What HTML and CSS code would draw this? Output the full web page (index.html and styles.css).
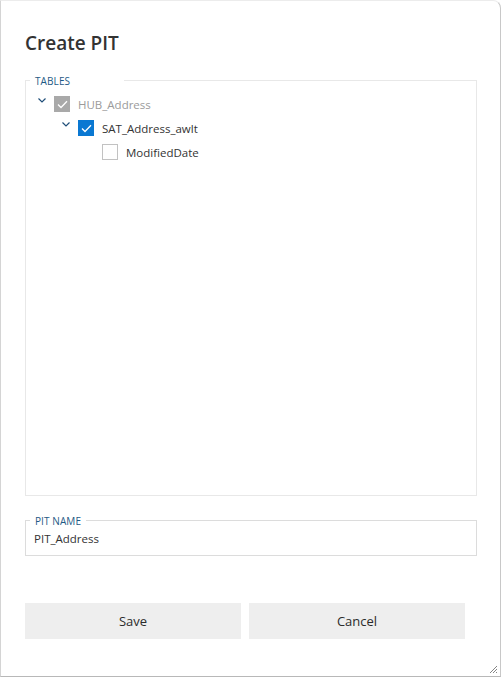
FILE: index.html
```html
<!DOCTYPE html>
<html>
<head>
<meta charset="utf-8">
<link rel="stylesheet" href="styles.css">
</head>
<body>
<div class="dialog">
  <h1 class="title">Create PIT</h1>
  <fieldset class="group tables">
    <legend class="legend legend-wide">TABLES</legend>
    <ul class="tree">
      <li class="row lvl0">
        <span class="chev"><svg width="8" height="5" viewBox="0 0 8 5"><path d="M0.5 0.5 L4 4 L7.5 0.5" fill="none" stroke="#1f4e79" stroke-width="1.2"/></svg></span>
        <span class="cb cb-disabled"><svg width="11" height="9" viewBox="0 0 11 9"><path d="M1 4.5 L4 7.5 L10 1.2" fill="none" stroke="#fff" stroke-width="1.3"/></svg></span>
        <span class="lbl lbl-disabled">HUB_Address</span>
      </li>
      <li class="row lvl1">
        <span class="chev"><svg width="8" height="5" viewBox="0 0 8 5"><path d="M0.5 0.5 L4 4 L7.5 0.5" fill="none" stroke="#1f4e79" stroke-width="1.2"/></svg></span>
        <span class="cb cb-checked"><svg width="11" height="9" viewBox="0 0 11 9"><path d="M1 4.5 L4 7.5 L10 1.2" fill="none" stroke="#fff" stroke-width="1.3"/></svg></span>
        <span class="lbl">SAT_Address_awlt</span>
      </li>
      <li class="row lvl2">
        <span class="chev"></span>
        <span class="cb"></span>
        <span class="lbl">ModifiedDate</span>
      </li>
    </ul>
  </fieldset>
  <fieldset class="group name">
    <legend class="legend">PIT NAME</legend>
    <div class="value">PIT_Address</div>
  </fieldset>
  <div class="actions">
    <button class="btn">Save</button>
    <button class="btn">Cancel</button>
  </div>
  <span class="grip"><svg width="9" height="9" viewBox="0 0 9 9"><path d="M1 8 L8 1 M4 8 L8 4 M7 8 L8 7" stroke="#777" stroke-width="0.9"/></svg></span>
</div>
</body>
</html>
```
FILE: styles.css
```css
* { box-sizing: border-box; }
html, body { margin: 0; padding: 0; background: #fff; }
body {
  font-family: "Open Sans", "Noto Sans", sans-serif;
  color: #333;
}
.dialog {
  position: relative;
  width: 501px;
  height: 677px;
  border: 1px solid #d4d4d4;
  border-top-color: #ececec;
  border-bottom-color: #b8b8b8;
  border-right-color: #c8c8c8;
  border-radius: 0 8px 0 0;
  padding: 0 24px;
  background: #fff;
}
.title {
  margin: 0;
  padding-top: 29px;
  height: 79px;
  font-size: 19px;
  line-height: 26px;
  font-weight: 600;
  color: #333;
}
.group {
  margin: 0;
  border: 1px solid #e8e8e8;
  padding: 0;
  min-width: 0;
  width: 452px;
}
.legend {
  margin-left: 4px;
  padding: 2px 5px 0;
  font-size: 10px;
  line-height: 10px;
  color: #1e5a86;
  letter-spacing: 0.1px;
  font-weight: 500;
}
.legend-wide { padding-right: 54px; }
.tables { height: 422px; margin-top: -6px; }
.tree { list-style: none; margin: 0; padding: 6px 0 0 0; }
.row {
  display: flex;
  align-items: center;
  height: 24px;
}
.lvl0 { padding-left: 12px; }
.lvl1 { padding-left: 36px; }
.lvl2 { padding-left: 60px; }
.chev {
  width: 16px;
  height: 16px;
  display: flex;
  align-items: flex-start;
  justify-content: flex-start;
  padding-top: 2px;
}
.cb {
  width: 16px;
  height: 16px;
  border: 1px solid #c2c2c2;
  background: #fff;
  display: flex;
  align-items: center;
  justify-content: center;
  margin-left: 0;
}
.cb-disabled { background: #a9a9a9; border-color: #a9a9a9; }
.cb-checked { background: #0a78d2; border-color: #0a78d2; }
.lbl {
  margin-left: 8px;
  font-size: 11.5px;
  color: #333;
}
.lbl-disabled { color: #9b9b9b; }
.name {
  margin-top: 18px;
  height: 42px;
  border-color: #dcdcdc;
}
.value {
  padding: 5px 0 0 8px;
  font-size: 11.5px;
  line-height: 16px;
  color: #333;
}
.actions {
  display: flex;
  gap: 8px;
  margin-top: 47px;
}
.btn {
  width: 216px;
  height: 36px;
  border: 0;
  background: #eeeeee;
  font-family: "Open Sans", "Noto Sans", sans-serif;
  font-size: 13px;
  color: #2b2b2b;
  font-weight: 500;
}
.grip {
  position: absolute;
  right: 2px;
  bottom: 2px;
  width: 9px;
  height: 9px;
  display: flex;
}
```
